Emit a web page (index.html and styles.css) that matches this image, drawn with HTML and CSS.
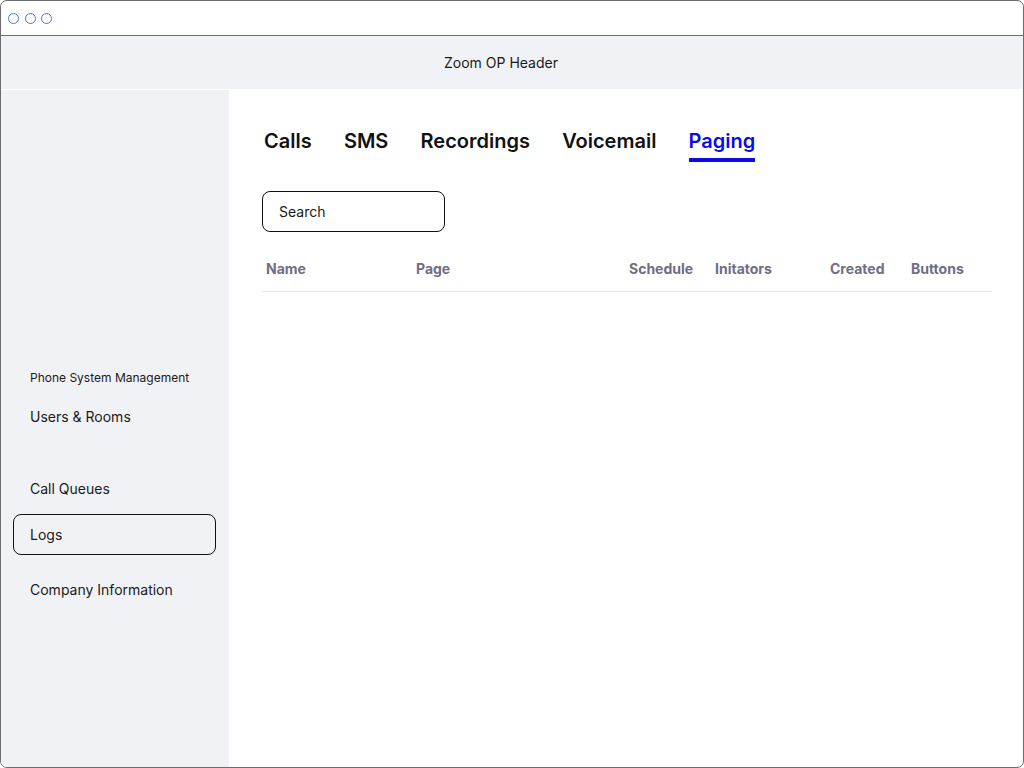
FILE: index.html
```html
<!DOCTYPE html>
<html>
<head>
<meta charset="utf-8">
<link rel="stylesheet" href="styles.css">
</head>
<body>
<div class="window">
  <div class="titlebar">
    <span class="dot"></span><span class="dot"></span><span class="dot"></span>
  </div>
  <div class="header">Zoom OP Header</div>
  <div class="main">
    <aside class="sidebar">
      <div class="label">Phone System Management</div>
      <div class="nav nav-users">Users &amp; Rooms</div>
      <div class="nav nav-queues">Call Queues</div>
      <div class="nav nav-logs active">Logs</div>
      <div class="nav nav-company">Company Information</div>
    </aside>
    <section class="content">
      <nav class="tabs">
        <span class="tab">Calls</span>
        <span class="tab">SMS</span>
        <span class="tab">Recordings</span>
        <span class="tab">Voicemail</span>
        <span class="tab selected">Paging</span>
      </nav>
      <div class="search">Search</div>
      <div class="table-head">
        <span>Name</span>
        <span>Page</span>
        <span>Schedule</span>
        <span>Initators</span>
        <span>Created</span>
        <span>Buttons</span>
      </div>
    </section>
  </div>
</div>
</body>
</html>
```

FILE: styles.css
```css
* { box-sizing: border-box; }
html, body { margin: 0; padding: 0; background: #ffffff; }
body { font-family: Inter, "Noto Sans", sans-serif; color: #111111; }

.window {
  width: 1024px;
  height: 768px;
  border: 1px solid #6b6b6b;
  border-radius: 7px;
  overflow: hidden;
  display: flex;
  flex-direction: column;
  background: #ffffff;
}

.titlebar {
  height: 35px;
  flex: none;
  border-bottom: 1px solid #6b6b6b;
  display: flex;
  align-items: center;
  gap: 5.5px;
  padding-left: 7px;
  padding-top: 1px;
}
.dot {
  width: 11px;
  height: 11px;
  border: 1.4px solid #4f78d4;
  border-radius: 50%;
}

.header {
  height: 54px;
  flex: none;
  background: #f1f2f6;
  border-bottom: 1px solid #ffffff;
  display: flex;
  align-items: center;
  justify-content: center;
  font-size: 14px;
  padding-right: 22px;
  color: #1a1a1a;
}

.main {
  flex: 1;
  display: flex;
  min-height: 0;
}

.sidebar {
  width: 228px;
  flex: none;
  background: #f1f2f6;
  display: flex;
  flex-direction: column;
  padding-top: 280px;
}
.label {
  font-size: 12px;
  line-height: 15px;
  padding-left: 29px;
  color: #1a1a1a;
}
.nav {
  height: 41px;
  margin-left: 12px;
  width: 203px;
  border: 1px solid transparent;
  border-radius: 8px;
  display: flex;
  align-items: center;
  padding-left: 16px;
  font-size: 14px;
  color: #1a1a1a;
}
.nav-users { margin-top: 11px; }
.nav-queues { margin-top: 31px; }
.nav-logs { margin-top: 5px; }
.nav-company { margin-top: 14px; }
.nav.active { border-color: #111111; }

.content {
  flex: 1;
  padding-left: 33px;
  padding-top: 38px;
}

.tabs {
  display: flex;
  gap: 32.2px;
  padding-left: 2px;
}
.tab {
  font-size: 20px;
  font-weight: 600;
  line-height: 26px;
  padding-bottom: 4px;
  border-bottom: 4px solid transparent;
  color: #111111;
}
.tab.selected {
  color: #0b0bea;
  border-bottom-color: #0b0bea;
}

.search {
  margin-top: 29px;
  width: 183px;
  height: 41px;
  border: 1px solid #111111;
  border-radius: 8px;
  display: flex;
  align-items: center;
  padding-left: 16px;
  font-size: 14px;
  color: #1a1a1a;
}

.table-head {
  margin-top: 16px;
  width: 730px;
  display: grid;
  grid-template-columns: 150px 213px 86px 115px 81px 1fr;
  height: 44px;
  align-items: center;
  border-bottom: 1px solid #ebebeb;
  padding-bottom: 3px;
}
.table-head span {
  padding-left: 4px;
  font-size: 14px;
  font-weight: 700;
  color: #6e6e84;
}
```
